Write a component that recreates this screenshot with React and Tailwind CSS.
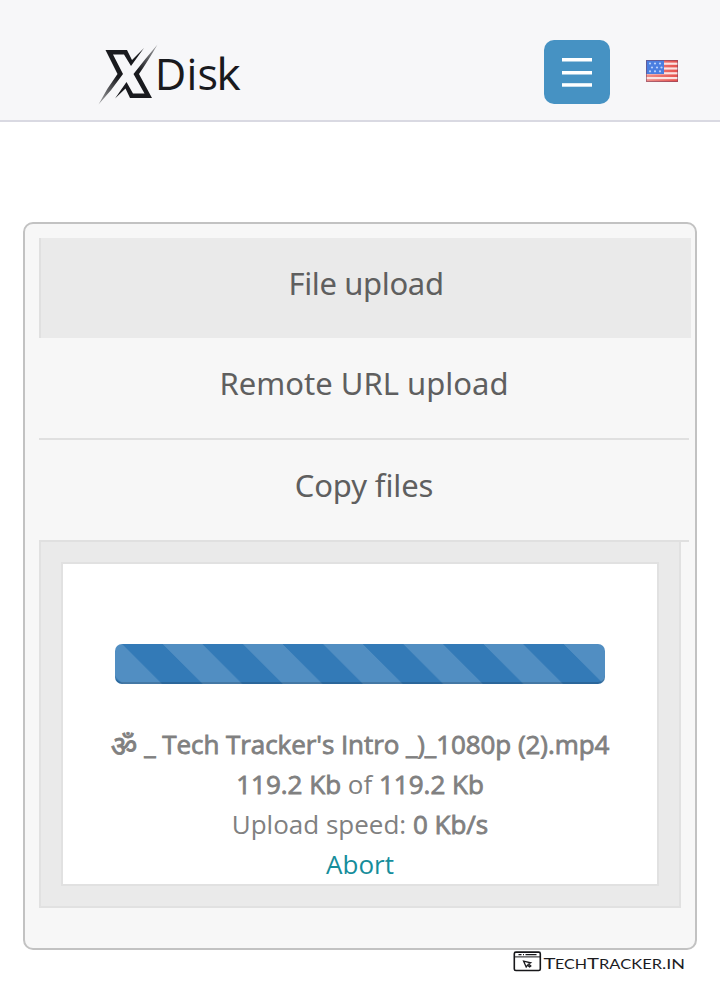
function Logo() {
  return (
    <svg className="block h-[72px] w-[152px]" viewBox="96 40 152 72" role="img" aria-label="XDisk">
      <defs>
        <linearGradient id="fadeUp" gradientUnits="userSpaceOnUse" x1="138" y1="70" x2="158" y2="44">
          <stop offset="0" stopColor="#191a1e" />
          <stop offset="1" stopColor="#191a1e" stopOpacity="0.35" />
        </linearGradient>
        <linearGradient id="fadeDown" gradientUnits="userSpaceOnUse" x1="119" y1="78" x2="98" y2="105">
          <stop offset="0" stopColor="#191a1e" />
          <stop offset="1" stopColor="#191a1e" stopOpacity="0.35" />
        </linearGradient>
      </defs>
      <path
        d="M105.5 50 L127 50 L132 60 L144 48 L131 66 L124 54.6 L113 54.6 L123 74 Q112 90 98.5 104.5 Q107 88 117.5 74 Z"
        fill="url(#fadeDown)"
      />
      <path
        d="M157.5 44.5 Q148 61 139 74 L152 98 L130 98 L125.5 88.5 L115 98.5 L126.5 82 L133 93.4 L144.5 93.4 L133.5 74 Q145 59 157.5 44.5 Z"
        fill="url(#fadeUp)"
      />
      <g className="font-['Open_Sans','Noto_Sans',sans-serif]" fontSize="43" fill="#191a1e">
        <text x="154.8" y="90" textLength="31.5" lengthAdjust="spacingAndGlyphs">D</text>
        <text x="186.5" y="90">i</text>
        <text x="197.5" y="90" textLength="20.5" lengthAdjust="spacingAndGlyphs">s</text>
        <text x="216.2" y="90" textLength="24.5" lengthAdjust="spacingAndGlyphs">k</text>
      </g>
    </svg>
  );
}

function MenuIcon() {
  return (
    <svg className="h-8 w-[30px]" viewBox="0 0 30 32" fill="#fff" aria-hidden="true">
      <rect y="2" width="30" height="3.5" />
      <rect y="15" width="30" height="3.5" />
      <rect y="27.2" width="30" height="3.5" />
    </svg>
  );
}

function Flag() {
  const stripes = [2.6, 7.4, 12.2, 17];
  const stars = [[4, 3.5], [9, 3.5], [14, 3.5], [6, 7.5], [11, 7.5], [15.5, 7.5], [4, 11.3], [9, 11.3], [14, 11.3]];
  return (
    <svg className="h-[22px] w-8" viewBox="0 0 32 22" aria-hidden="true">
      <defs>
        <linearGradient id="flagRed" x1="0" y1="0" x2="1" y2="0">
          <stop offset="0" stopColor="#f0908a" />
          <stop offset="1" stopColor="#e6504c" />
        </linearGradient>
      </defs>
      <rect width="32" height="22" fill="url(#flagRed)" />
      {stripes.map((y) => (
        <rect key={y} y={y} width="32" height="2.2" fill="#fbe3e1" />
      ))}
      <rect width="18" height="14" fill="#4b7ee0" />
      {stars.map(([x, y]) => (
        <circle key={`${x}-${y}`} cx={x} cy={y} r="1.1" fill="#bcd2fa" />
      ))}
      <rect x="0.5" y="0.5" width="31" height="21" fill="none" stroke="#77405e" strokeOpacity="0.55" />
    </svg>
  );
}

function Tab({ children, className }) {
  return (
    <div className={`flex justify-center font-['Noto_Sans','Open_Sans',sans-serif] text-[31px] leading-[40px] text-[#5f5f5f] ${className}`}>
      <span>{children}</span>
    </div>
  );
}

function Strong({ children }) {
  return <span className="[-webkit-text-stroke:0.8px_#808080]">{children}</span>;
}

function Watermark() {
  return (
    <svg className="block h-[24px] w-[174px]" viewBox="512 950 174 24" role="img" aria-label="TechTracker.in">
      <rect x="514.3" y="952.1" width="26" height="18.4" rx="1.6" fill="none" stroke="#17171a" strokeWidth="1.6" />
      <path d="M514 956.9H540" stroke="#17171a" strokeWidth="1" />
      <path d="M518.5 954.6h3M523 954.6h1M525.5 954.6h11" stroke="#17171a" strokeWidth="1.1" />
      <path d="M523.6 961.2 L530.6 962.8 L528.6 964 L530.8 966 L529.6 967 L527.6 965.2 L526.2 967 Z" fill="none" stroke="#17171a" strokeWidth="1.3" />
      <g className="font-['Lato','Open_Sans',sans-serif]" fill="#1c1c1f" fontSize="12.5">
        <text x="543.5" y="969" fontSize="15.5" textLength="12" lengthAdjust="spacingAndGlyphs">T</text>
        <text x="555" y="969" textLength="32" lengthAdjust="spacingAndGlyphs">ECH</text>
        <text x="587" y="969" fontSize="15.5" textLength="12" lengthAdjust="spacingAndGlyphs">T</text>
        <text x="599" y="969" textLength="63" lengthAdjust="spacingAndGlyphs">RACKER</text>
        <text x="662" y="969" textLength="23" lengthAdjust="spacingAndGlyphs">.IN</text>
      </g>
    </svg>
  );
}

export default function App() {
  return (
    <div className="flex h-[993px] w-[720px] flex-col overflow-hidden bg-white">
      <header className="flex h-[122px] shrink-0 items-start border-b-2 border-[#d9d9e2] bg-[#f7f7f9] pl-24">
        <div className="mt-10">
          <Logo />
        </div>
        <button className="mt-10 ml-[296px] flex h-16 w-[66px] items-center justify-center rounded-[10px] bg-[#4692c3]">
          <MenuIcon />
        </button>
        <div className="mt-[60px] ml-9">
          <Flag />
        </div>
      </header>

      <main className="mx-[23px] mt-[100px] h-[728px] shrink-0 rounded-[10px] border-2 border-[#c2c2c2] bg-[#f7f7f7] pt-[14px] pl-[14px]">
        <Tab className="h-[100px] w-[652px] border-l-2 border-[#e0e0e0] bg-[#eaeaea] pt-[25px] tracking-[-0.35px]">File upload</Tab>
        <Tab className="h-[102px] w-[650px] border-b-2 border-[#e0e0e0] pt-[25px]">Remote URL upload</Tab>
        <Tab className="h-[102px] w-[650px] border-b-2 border-[#e0e0e0] pt-[25px] tracking-[-0.1px]">Copy files</Tab>

        <section className="h-[366px] w-[642px] border-2 border-t-0 border-[#e1e1e1] bg-[#eaeaea] px-5 pt-5">
          <div className="h-[324px] border-2 border-[#e1e1e1] bg-white px-[52px] pt-20">
            <div className="h-10 rounded-[7px] bg-[#337ab7] bg-[linear-gradient(45deg,rgba(255,255,255,.15)_25%,transparent_25%,transparent_50%,rgba(255,255,255,.15)_50%,rgba(255,255,255,.15)_75%,transparent_75%)] bg-[length:80.2px_80.2px] bg-[position:-33px_0] shadow-[inset_0_-2px_0_rgba(0,0,0,0.15)]" />
            <div className="-mx-[40px] mt-10 text-center font-['Open_Sans','Noto_Sans',sans-serif] text-[26px] leading-[40px] whitespace-nowrap text-[#808080]">
              <p className="tracking-[-0.07px]">
                <Strong><span className="relative top-[2px] mr-[0.5px] text-[29px] leading-none">ॐ</span> _ Tech Tracker's Intro _)_1080p (2).mp4</Strong>
              </p>
              <p><Strong>119.2 Kb</Strong> of <Strong>119.2 Kb</Strong></p>
              <p>Upload speed: <Strong>0 Kb/s</Strong></p>
              <p className="text-[#168d9b]">Abort</p>
            </div>
          </div>
        </section>
      </main>

      <footer className="flex justify-end pr-[34px]">
        <Watermark />
      </footer>
    </div>
  );
}
